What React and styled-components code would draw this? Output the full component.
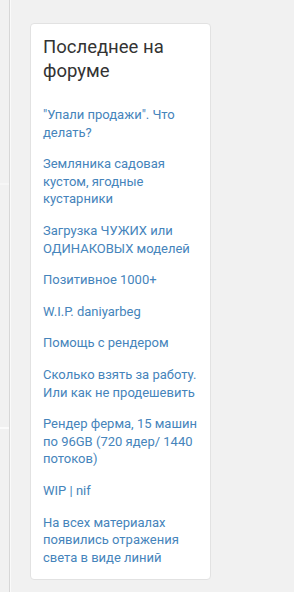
import styled, { createGlobalStyle } from 'styled-components';

const posts = [
  '"Упали продажи". Что делать?',
  'Земляника садовая кустом, ягодные кустарники',
  'Загрузка ЧУЖИХ или ОДИНАКОВЫХ моделей',
  'Позитивное 1000+',
  'W.I.P. daniyarbeg',
  'Помощь с рендером',
  'Сколько взять за работу. Или как не продешевить',
  'Рендер ферма, 15 машин по 96GB (720 ядер/ 1440 потоков)',
  'WIP | nif',
  'На всех материалах появились отражения света в виде линий',
];

export default function App() {
  return (
    <>
      <GlobalStyle />
      <Page>
        <SideColumn>
          <SideDivider $top={183} />
          <SideDivider $top={242} />
        </SideColumn>
        <Aside>
          <ForumCard>
            <CardTitle>Последнее на форуме</CardTitle>
            <PostList>
              {posts.map((post) => (
                <PostItem key={post}>
                  <PostLink href="#">{post}</PostLink>
                </PostItem>
              ))}
            </PostList>
          </ForumCard>
        </Aside>
      </Page>
    </>
  );
}

const GlobalStyle = createGlobalStyle`
  html, body {
    margin: 0;
    padding: 0;
    background: #f1f1f1;
    font-family: Roboto, "Liberation Sans", sans-serif;
  }
`;

const Page = styled.div`
  display: flex;
  min-height: 592px;
`;

const SideColumn = styled.div`
  width: 9px;
  flex-shrink: 0;
  border-right: 1px solid #d7d7d7;
  box-shadow: 1px 0 0 #fafafa;
  display: flex;
  flex-direction: column;
`;

const SideDivider = styled.div`
  height: 2px;
  background: #fbfbfb;
  margin-top: ${({ $top }) => $top}px;
  &:first-child {
    background: #f6f6f6;
  }
`;

const Aside = styled.div`
  padding: 23px 0 0 20px;
`;

const ForumCard = styled.div`
  width: 155px;
  padding: 11px 12px 13px 12px;
  background: #fff;
  border: 1px solid #e2e2e2;
  border-radius: 4px;
`;

const CardTitle = styled.h3`
  margin: 0 0 23px;
  font-size: 18.5px;
  font-weight: 400;
  line-height: 24px;
  color: #333;
`;

const PostList = styled.ul`
  list-style: none;
  margin: 0;
  padding: 0;
`;

const PostItem = styled.li`
  font-size: 13px;
  line-height: 17.6px;
  margin-bottom: 14px;
  &:last-child {
    margin-bottom: 0;
  }
`;

const PostLink = styled.a`
  color: #4584bb;
  text-decoration: none;
`;
